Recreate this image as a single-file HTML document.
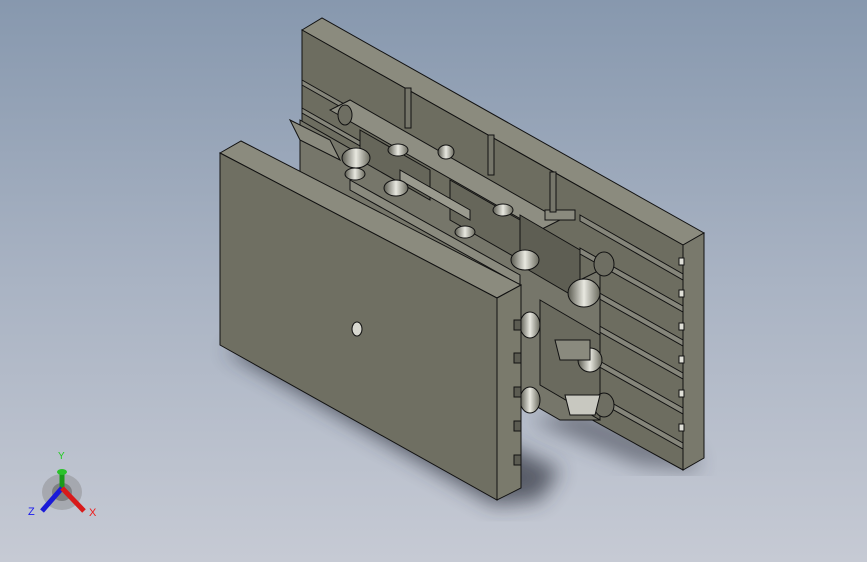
<!DOCTYPE html>
<html><head><style>
html,body{margin:0;padding:0;width:867px;height:562px;overflow:hidden}
body{background:linear-gradient(180deg,#8798ae 0%,#a9b3c3 50%,#c6cad4 100%)}
svg{position:absolute;left:0;top:0}
</style></head><body>
<svg width="867" height="562" viewBox="0 0 867 562">
<defs>
<filter id="b"><feGaussianBlur stdDeviation="10"/></filter>
<linearGradient id="cy" x1="0" x2="1"><stop offset="0" stop-color="#5a5a50"/><stop offset="0.5" stop-color="#e8e8e0"/><stop offset="1" stop-color="#6a6a5e"/></linearGradient>
</defs>
<!-- shadows -->
<polygon points="225,350 495,505 540,500 560,470 290,340" fill="#2e323c" opacity="0.7" filter="url(#b)"/>
<polygon points="530,420 640,465 700,470 690,450 580,410" fill="#3a3e48" opacity="0.55" filter="url(#b)"/>
<!-- back plate -->
<polygon points="302,30 322,18 704,233 683,245" fill="#8b8b7e" stroke="#111" stroke-width="1"/>
<polygon points="302,30 683,245 683,470 302,260" fill="#6d6d60" stroke="#111" stroke-width="1"/>
<polygon points="683,245 704,233 704,458 683,470" fill="#79796c" stroke="#111" stroke-width="1"/>
<g stroke="#111" stroke-width="1" fill="#85857a">
<polygon points="302,80 420,147 420,152 302,85"/>
<polygon points="302,108 420,175 420,180 302,113"/>
<polygon points="580,215 683,274 683,280 580,221"/>
<polygon points="580,248 683,306 683,312 580,254"/>
<polygon points="580,282 683,340 683,346 580,288"/>
<polygon points="580,315 683,373 683,379 580,321"/>
<polygon points="580,350 683,408 683,414 580,356"/>
<polygon points="580,385 683,443 683,449 580,391"/>
</g>
<g fill="#e0e0d8" stroke="#111"><rect x="679" y="258" width="5" height="7"/><rect x="679" y="290" width="5" height="7"/><rect x="679" y="323" width="5" height="7"/><rect x="679" y="356" width="5" height="7"/><rect x="679" y="390" width="5" height="7"/><rect x="679" y="424" width="5" height="7"/></g>
<!-- inner mechanism -->
<g stroke="#111" stroke-width="1">
<polygon points="300,120 580,280 600,270 600,420 560,420 300,270" fill="#76766a"/>
<polygon points="330,110 540,230 560,220 350,100" fill="#8e8e82"/>
<polygon points="360,130 430,170 430,200 360,160" fill="#66665a"/>
<polygon points="450,180 520,220 520,260 450,220" fill="#66665a"/>
<polygon points="520,215 580,250 580,300 520,265" fill="#5e5e53"/>
<polygon points="540,300 600,335 600,420 540,385" fill="#6a6a5e"/>
<polygon points="290,120 330,140 340,160 300,140" fill="#8a8a7e"/>
<polygon points="400,170 470,210 470,220 400,180" fill="#9a9a8e"/>
<polygon points="350,180 520,275 520,285 350,190" fill="#8a8a7e"/>
<rect x="545" y="210" width="30" height="10" fill="#8a8a7e"/>
<rect x="405" y="88" width="6" height="40" fill="#76766a"/>
<rect x="488" y="135" width="6" height="40" fill="#76766a"/>
<rect x="550" y="172" width="6" height="40" fill="#76766a"/>
</g>
<g stroke="#111" stroke-width="1">
<ellipse cx="356" cy="158" rx="14" ry="10" fill="url(#cy)"/>
<ellipse cx="398" cy="150" rx="10" ry="6" fill="url(#cy)"/>
<ellipse cx="355" cy="174" rx="10" ry="6" fill="url(#cy)"/>
<ellipse cx="396" cy="188" rx="12" ry="8" fill="url(#cy)"/>
<ellipse cx="503" cy="210" rx="10" ry="6" fill="url(#cy)"/>
<ellipse cx="465" cy="232" rx="10" ry="6" fill="url(#cy)"/>
<ellipse cx="525" cy="260" rx="14" ry="10" fill="url(#cy)"/>
<ellipse cx="584" cy="293" rx="16" ry="14" fill="url(#cy)"/>
<ellipse cx="590" cy="360" rx="12" ry="12" fill="url(#cy)"/>
<ellipse cx="530" cy="325" rx="10" ry="13" fill="url(#cy)"/>
<ellipse cx="530" cy="400" rx="10" ry="13" fill="url(#cy)"/>
<ellipse cx="604" cy="264" rx="10" ry="12" fill="#6e6e62"/>
<ellipse cx="604" cy="405" rx="10" ry="12" fill="#6e6e62"/>
<polygon points="555,340 590,340 590,360 560,360" fill="#8a8a7e"/>
<polygon points="565,395 600,395 595,415 570,415" fill="#c8c8c0"/>
<ellipse cx="446" cy="152" rx="8" ry="7" fill="url(#cy)"/>
<ellipse cx="345" cy="115" rx="7" ry="10" fill="#6e6e62"/>
</g>
<!-- front plate -->
<polygon points="220,153 241,141 521,285 497,298" fill="#8b8b7e" stroke="#111" stroke-width="1"/>
<polygon points="220,153 497,298 497,500 220,345" fill="#6f6f62" stroke="#111" stroke-width="1"/>
<polygon points="497,298 521,285 521,488 497,500" fill="#7a7a6c" stroke="#111" stroke-width="1"/>
<g fill="#5c5c52" stroke="#111"><rect x="514" y="320" width="7" height="10"/><rect x="514" y="353" width="7" height="10"/><rect x="514" y="387" width="7" height="10"/><rect x="514" y="421" width="7" height="10"/><rect x="514" y="455" width="7" height="10"/></g>
<ellipse cx="357" cy="329" rx="5" ry="7" fill="#d8d8d0" stroke="#111"/>
<g>
<ellipse cx="62" cy="492" rx="20" ry="18" fill="#888" opacity="0.45"/>
<ellipse cx="62" cy="492" rx="10" ry="9" fill="#555" opacity="0.5"/>
<line x1="62" y1="488" x2="62" y2="470" stroke="#1a9a1a" stroke-width="5"/>
<ellipse cx="62" cy="472" rx="5" ry="3" fill="#2ac22a"/>
<line x1="62" y1="488" x2="42" y2="511" stroke="#1a1ad8" stroke-width="5"/>
<line x1="62" y1="488" x2="84" y2="511" stroke="#d81a1a" stroke-width="5"/>
<text x="58" y="459" font-family="Liberation Sans,sans-serif" font-size="10" fill="#22cc22">Y</text>
<text x="28" y="515" font-family="Liberation Sans,sans-serif" font-size="11" fill="#1a1aee">Z</text>
<text x="89" y="516" font-family="Liberation Sans,sans-serif" font-size="11" fill="#ee1a1a">X</text>
</g>
</svg>
</body></html>
